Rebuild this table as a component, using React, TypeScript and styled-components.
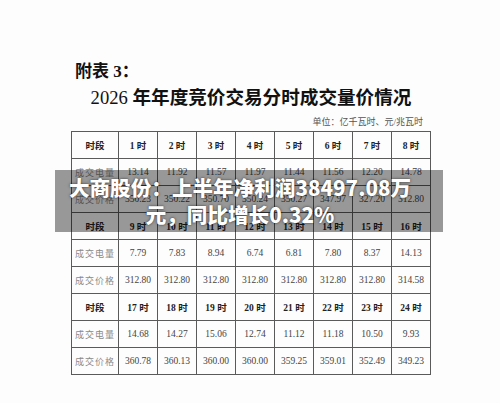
import React from 'react';
import styled, { createGlobalStyle } from 'styled-components';

const GlobalStyle = createGlobalStyle`
  html, body {
    margin: 0;
    padding: 0;
    background: #ffffff;
  }
  body {
    font-family: "Liberation Serif", "Noto Sans CJK SC", serif;
  }
`;

const Page = styled.div`
  position: relative;
  width: 500px;
  height: 403px;
  overflow: hidden;
  background: #fdfdfd;
  padding-top: 62px;
  box-sizing: border-box;
`;

const Heading = styled.div`
  margin-left: 75px;
  font-size: 17px;
  line-height: 20px;
  font-weight: 700;
  color: #111;
`;

const Title = styled.div`
  margin-top: 4px;
  padding-left: 2px;
  text-align: center;
  font-size: 18.6px;
  line-height: 24px;
  font-weight: 700;
  color: #111;
`;

const Year = styled.span`
  font-weight: 400;
`;

const Unit = styled.div`
  margin: 6px 77px 3px 0;
  text-align: right;
  font-size: 9px;
  line-height: 12px;
  color: #555;
`;

const Table = styled.table`
  margin-left: 71px;
  border-collapse: collapse;
  table-layout: fixed;
  width: 358px;
`;

const Cell = styled.td<{ $head?: boolean; $label?: boolean }>`
  height: 26px;
  padding: 0;
  border: 1.5px solid #5a5a5a;
  text-align: center;
  vertical-align: middle;
  font-size: ${(p) => (p.$label ? '9px' : '9.5px')};
  font-weight: ${(p) => (p.$head ? 700 : 400)};
  color: ${(p) => (p.$head ? '#222' : p.$label ? '#8a8a8a' : '#444')};
  letter-spacing: ${(p) => (p.$label ? '1px' : '0')};
`;

const Band = styled.div`
  position: absolute;
  left: 55px;
  top: 170px;
  width: 388px;
  height: 62px;
  box-sizing: border-box;
  padding: 4px 18px 0 0;
  background: rgba(0, 0, 0, 0.4);
  text-align: center;
  font-family: "Noto Sans CJK SC", "Noto Sans", sans-serif;
  font-size: 20.6px;
  line-height: 27px;
  font-weight: 900;
  color: #ffffff;
  text-shadow: 0 0 3px rgba(0, 0, 0, 0.55), 0 0 1px rgba(0, 0, 0, 0.4);
`;

type Block = {
  hours: number[];
  volume: string[];
  price: string[];
};

const blocks: Block[] = [
  {
    hours: [1, 2, 3, 4, 5, 6, 7, 8],
    volume: ['13.14', '11.92', '11.57', '11.97', '11.44', '11.56', '12.20', '14.78'],
    price: ['350.23', '350.22', '350.70', '350.24', '350.27', '347.97', '327.20', '312.80'],
  },
  {
    hours: [9, 10, 11, 12, 13, 14, 15, 16],
    volume: ['7.79', '7.83', '8.94', '6.74', '6.81', '7.80', '8.37', '14.13'],
    price: ['312.80', '312.80', '312.80', '312.80', '312.80', '312.80', '312.80', '314.58'],
  },
  {
    hours: [17, 18, 19, 20, 21, 22, 23, 24],
    volume: ['14.68', '14.27', '15.06', '12.74', '11.12', '11.18', '10.50', '9.93'],
    price: ['360.78', '360.13', '360.00', '360.00', '359.25', '359.01', '352.49', '349.23'],
  },
];

const App = () => {
  return (
    <>
      <GlobalStyle />
      <Page>
        <Heading>附表 3：</Heading>
        <Title>
          <Year>2026 </Year>年年度竞价交易分时成交量价情况
        </Title>
        <Unit>单位：亿千瓦时、元/兆瓦时</Unit>
        <Table>
          <colgroup>
            <col style={{ width: 47 }} />
            {blocks[0].hours.map((h) => (
              <col key={h} style={{ width: 39 }} />
            ))}
          </colgroup>
          <tbody>
            {blocks.map((b) => (
              <React.Fragment key={b.hours[0]}>
                <tr>
                  <Cell $head>时段</Cell>
                  {b.hours.map((h) => (
                    <Cell key={h} $head>
                      {h} 时
                    </Cell>
                  ))}
                </tr>
                <tr>
                  <Cell $label>成交电量</Cell>
                  {b.volume.map((v, i) => (
                    <Cell key={i}>{v}</Cell>
                  ))}
                </tr>
                <tr>
                  <Cell $label>成交价格</Cell>
                  {b.price.map((v, i) => (
                    <Cell key={i}>{v}</Cell>
                  ))}
                </tr>
              </React.Fragment>
            ))}
          </tbody>
        </Table>
        <Band>
          大商股份：上半年净利润38497.08万
          <br />
          元，同比增长0.32%
        </Band>
      </Page>
    </>
  );
};

export default App;
